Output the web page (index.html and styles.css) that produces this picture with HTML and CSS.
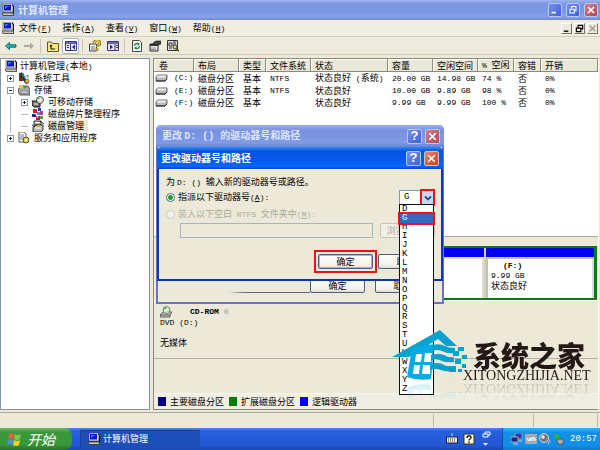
FILE: index.html
```html
<!DOCTYPE html>
<html lang="zh-CN">
<head>
<meta charset="utf-8">
<title>计算机管理</title>
<link rel="stylesheet" href="styles.css">
</head>
<body>
<svg class="sprite" aria-hidden="true">
  <symbol id="pc" viewBox="0 0 12 12"><path d="M1 0h9l1 1v7H1z" fill="#d8d8d0" stroke="#444" stroke-width=".6"/><path d="M2 1h7v5.500H2z" fill="#0a18c8"/><path d="M3 2l4 0-4 3z" fill="#4a6cf8"/><path d="M0 9h11l1 2.500H1z" fill="#c8c8c0" stroke="#222" stroke-width=".7"/><path d="M10 1l1.500 1v6l1 3" stroke="#111" fill="none"/></symbol>
  <symbol id="drive" viewBox="0 0 13 8"><path d="M2.500 1h9.500v4l-2 2H1V3z" fill="#b8b8b8" stroke="#444" stroke-width=".8"/><path d="M2.500 1.500h9l-1.500 2H1.500z" fill="#eee"/><path d="M1 7h9l2-2" stroke="#222" fill="none"/></symbol>
  <symbol id="tools" viewBox="0 0 12 12"><path d="M1 1h4v8H1z" fill="#a01830"/><path d="M3 0l3 2 1 4 4 5-3 1-4-5-2-3z" fill="#333"/><path d="M4 2l4 5" stroke="#29b8c8"/><path d="M7 5l3-2v3M6 10h5" stroke="#777" fill="none"/><circle cx="9" cy="9" r="2" fill="#e0c030" stroke="#333" stroke-width=".6"/></symbol>
  <symbol id="store" viewBox="0 0 12 12"><path d="M1 4l2-2h7l2 3v6H2L0 8z" fill="#aaa" stroke="#333" stroke-width=".8"/><path d="M1 1h4v3H1z" fill="#e8c848"/><path d="M5 1l4 2-3 2z" fill="#37a948"/><path d="M3 7h7v2H3z" fill="#eee" stroke="#444" stroke-width=".5"/></symbol>
  <symbol id="disc" viewBox="0 0 12 12"><path d="M0 5h6l2 3v3H2L0 9z" fill="#777" stroke="#111"/><circle cx="8" cy="4" r="3.500" fill="#d8eed8" stroke="#111" stroke-width=".7"/><path d="M8 4L5 2l2-1.500z" fill="#3fb050"/><path d="M8 4l3 2-1 1z" fill="#e0b030"/><circle cx="8" cy="4" r="1" fill="#fff"/><path d="M2 8h4" stroke="#eee"/></symbol>
  <symbol id="cd" viewBox="0 0 12 12"><path d="M0 9l3-3h9l-2 3v2H0z" fill="#c8c8c0" stroke="#444" stroke-width=".8"/><path d="M0 9h10" stroke="#444" stroke-width=".8"/><circle cx="6.500" cy="4" r="3.500" fill="#cdeacd" stroke="#555" stroke-width=".7"/><path d="M6.500 4L3.500 2.500 6 .7z" fill="#3fb050"/><path d="M6.500 4l3 1.500-1 1.500z" fill="#e0c030"/><circle cx="6.500" cy="4" r="1" fill="#fff"/></symbol>
  <symbol id="defrag" viewBox="0 0 12 12"><path d="M1 1h4v4H1z" fill="#d01830"/><path d="M6 0h3v3H6z" fill="#1848c0"/><path d="M5 4h4v3H5z" fill="#20a8c0"/><path d="M8 3h3v4H8z" fill="#d02898"/><path d="M0 6h4v3H0z" fill="#1828a0"/><path d="M4 8h4v4H4z" fill="#c01838"/><path d="M8 8h3v3H8z" fill="#38a848"/><path d="M3 5l3 5" stroke="#fff"/></symbol>
  <symbol id="dmgr" viewBox="0 0 12 12"><path d="M2 1h7v4H2zM1 7l2-2h8v5l-2 2H1z" fill="#bbb" stroke="#222" stroke-width=".9"/><path d="M3 2.500h5M3 8h6" stroke="#fff"/><path d="M0 5l3 2M8 1l4 3" stroke="#222"/><path d="M5 5h4v2H5z" fill="#c8a838"/></symbol>
  <symbol id="svc" viewBox="0 0 12 12"><path d="M1 0h5l2 2v8H1z" fill="#fff" stroke="#333" stroke-width=".8"/><path d="M2 3h4M2 5h4M2 7h3" stroke="#555" stroke-width=".8"/><circle cx="8" cy="8" r="3" fill="#e0c840" stroke="#333" stroke-width=".8"/><circle cx="8" cy="8" r="1" fill="#fff"/></symbol>
  <symbol id="back" viewBox="0 0 12 12"><path d="M.5 6l4-3.500v2.300H11v2.400H4.500v2.300z" fill="#20b8c8" stroke="#064858" stroke-width=".8"/></symbol>
  <symbol id="fwd" viewBox="0 0 12 12"><path d="M11 6L7 2.500v2.500H1v2h6v2.500z" fill="#aaa99c"/></symbol>
  <symbol id="up" viewBox="0 0 12 12"><path d="M.5 2h4l1 1.500h6v8H.5z" fill="#f6e68a" stroke="#665a18"/><path d="M4 5v4h4" stroke="#111" fill="none"/><path d="M2.500 6.500L4 4.500l1.500 2z"/></symbol>
  <symbol id="pane" viewBox="0 0 12 12"><path d="M.5 1.500h11v9H.5z" fill="#e4e4f0" stroke="#38367c"/><path d="M1 2h10v2H1z" fill="#6a68a8"/><path d="M5.500 4v6" stroke="#38367c"/><path d="M2 5.500h2M2 7.500h2" stroke="#38367c"/><path d="M10 4.500v5L7 7z" fill="#2a2880"/></symbol>
  <symbol id="pane2" viewBox="0 0 12 12"><path d="M.5 1.500h11v9H.5z" fill="#e4e4f0" stroke="#38367c"/><path d="M1 2h10v2H1z" fill="#6a68a8"/><path d="M8 4v6" stroke="#38367c"/><path d="M9 5.500h2M9 7.500h2" stroke="#38367c"/><path d="M3 4.500v5L6 7z" fill="#2a2880"/></symbol>
  <symbol id="help" viewBox="0 0 12 12"><path d="M.5 4h7v7h-7z" fill="#eee" stroke="#444"/><path d="M2 7h4M2 9h4" stroke="#777"/><path d="M5 3c0-3 6-3 6 0 0 2-3 2-3 4M8 8.500v2" stroke="#554800" fill="none" stroke-width="2.600"/><path d="M5 3c0-3 6-3 6 0 0 2-3 2-3 4M8 8.500v2" stroke="#f4dc38" fill="none" stroke-width="1.300"/></symbol>
  <symbol id="refresh" viewBox="0 0 12 12"><path d="M1.500.500h7l2 2v9h-9z" fill="#fff" stroke="#333" stroke-width=".9"/><path d="M3.500 6c0-2 2-3 3.500-2M8.500 6c0 2-2 3-3.500 2" stroke="#188840" fill="none" stroke-width="1.300"/><path d="M6.500 2l2.500 2-2.500 2zM5.500 6L3 8l2.500 2z" fill="#188840"/></symbol>
  <symbol id="props" viewBox="0 0 12 12"><path d="M1 4h8v7H1z" fill="#eee" stroke="#222"/><path d="M1 4h8v2H1z" fill="#333"/><path d="M2 8h5M2 9.500h5" stroke="#666" stroke-width=".7"/><path d="M4 3l3-2h5v3l-3 1H5z" fill="#444" stroke="#111" stroke-width=".6"/></symbol>
  <symbol id="find" viewBox="0 0 12 12"><path d="M.5.500h10v10H.5z" fill="#ddd" stroke="#333"/><path d="M2 3h3v3H2zM6 2h3M6 4h3M2 8h3" stroke="#333" fill="none"/><circle cx="8" cy="7" r="2" fill="#e8d848" stroke="#444"/><path d="M9 9l3 2" stroke="#665a18" stroke-width="1.600"/></symbol>
</svg>

<main class="window">
  <header class="titlebar">
    <svg class="ico"><use href="#pc"/></svg>
    <h1>计算机管理</h1>
    <button class="cap" aria-label="最小化"><svg viewBox="0 0 14 14"><path d="M3 10h5" stroke="#fff" stroke-width="2"/></svg></button>
    <button class="cap" aria-label="还原"><svg viewBox="0 0 14 14"><path d="M5.500 5V3h5v5H8.500M3.500 6h5v4.500h-5z" fill="none" stroke="#fff" stroke-width="1.200"/></svg></button>
    <button class="cap close" aria-label="关闭"><svg viewBox="0 0 14 14"><path d="M3.500 3.500l7 7m0-7l-7 7" stroke="#fff" stroke-width="1.800"/></svg></button>
  </header>
  <nav class="menubar">
    <svg class="ico"><use href="#pc"/></svg>
    <button>文件<span class="l">(<u>F</u>)</span></button>
    <button>操作<span class="l">(<u>A</u>)</span></button>
    <button>查看<span class="l">(<u>V</u>)</span></button>
    <button>窗口<span class="l">(<u>W</u>)</span></button>
    <button>帮助<span class="l">(<u>H</u>)</span></button>
    <div class="mdi">
      <button aria-label="最小化窗口"><svg viewBox="0 0 10 10"><path d="M2 8h5" stroke="#000" stroke-width="1.500"/></svg></button>
      <button aria-label="还原窗口"><svg viewBox="0 0 10 10"><path d="M3.500 4V1.500h5v4H7M1.500 4.500h5v4h-5z" fill="none" stroke="#000" stroke-width="1.300"/></svg></button>
      <button aria-label="关闭窗口"><svg viewBox="0 0 10 10"><path d="M2 2l6 6m0-6L2 8" stroke="#9a988c" stroke-width="1.500"/></svg></button>
    </div>
  </nav>
  <div class="toolbar">
    <button aria-label="后退"><svg class="ico"><use href="#back"/></svg></button>
    <button aria-label="前进"><svg class="ico"><use href="#fwd"/></svg></button>
    <i class="sep"></i>
    <button aria-label="向上"><svg class="ico"><use href="#up"/></svg></button>
    <button class="on" aria-label="显示树"><svg class="ico"><use href="#pane"/></svg></button>
    <i class="sep"></i>
    <button aria-label="帮助"><svg class="ico"><use href="#help"/></svg></button>
    <button aria-label="窗格"><svg class="ico"><use href="#pane2"/></svg></button>
    <i class="sep"></i>
    <button aria-label="刷新"><svg class="ico"><use href="#refresh"/></svg></button>
    <button aria-label="属性"><svg class="ico"><use href="#props"/></svg></button>
    <button aria-label="查找"><svg class="ico"><use href="#find"/></svg></button>
  </div>

  <div class="panes">
    <ul class="tree">
      <li class="root"><svg class="ico"><use href="#pc"/></svg><span>计算机管理<span class="l">(</span>本地<span class="l">)</span></span></li>
      <li><i class="exp plus"></i><svg class="ico"><use href="#tools"/></svg><span>系统工具</span></li>
      <li><i class="exp"></i><svg class="ico"><use href="#store"/></svg><span>存储</span></li>
      <li class="sub"><i class="exp plus"></i><svg class="ico"><use href="#disc"/></svg><span>可移动存储</span></li>
      <li class="sub"><i class="leaf"></i><svg class="ico"><use href="#defrag"/></svg><span>磁盘碎片整理程序</span></li>
      <li class="sub"><i class="leaf"></i><svg class="ico"><use href="#dmgr"/></svg><span class="picked">磁盘管理</span></li>
      <li><i class="exp plus"></i><svg class="ico"><use href="#svc"/></svg><span>服务和应用程序</span></li>
    </ul>

    <section class="detail">
      <div class="volumes">
        <table>
          <colgroup><col class="c-vol"><col class="c-mid"><col class="c-short"><col class="c-mid"><col class="c-state"><col class="c-mid"><col class="c-mid"><col class="c-pct"><col class="c-short"><col></colgroup>
          <thead><tr><th>卷</th><th>布局</th><th>类型</th><th>文件系统</th><th>状态</th><th>容量</th><th>空闲空间</th><th><span class="l">% </span>空闲</th><th>容错</th><th>开销</th></tr></thead>
          <tbody>
            <tr><td><svg class="drv"><use href="#drive"/></svg><span class="l">(C:)</span></td><td>磁盘分区</td><td>基本</td><td class="l">NTFS</td><td>状态良好<span class="l"> (</span>系统<span class="l">)</span></td><td class="l">20.00 GB</td><td class="l">14.98 GB</td><td class="l">74 %</td><td>否</td><td class="l">0%</td></tr>
            <tr><td><svg class="drv"><use href="#drive"/></svg><span class="l">(E:)</span></td><td>磁盘分区</td><td>基本</td><td class="l">NTFS</td><td>状态良好</td><td class="l">10.00 GB</td><td class="l">9.89 GB</td><td class="l">98 %</td><td>否</td><td class="l">0%</td></tr>
            <tr><td><svg class="drv"><use href="#drive"/></svg><span class="l">(F:)</span></td><td>磁盘分区</td><td>基本</td><td></td><td>状态良好</td><td class="l">9.99 GB</td><td class="l">9.99 GB</td><td class="l">100 %</td><td>否</td><td class="l">0%</td></tr>
          </tbody>
        </table>
      </div>
      <div class="disk">
        <div class="extended">
          <div class="part"></div>
          <div class="part last">
            <b class="l">(F:)</b><span class="l">9.99 GB</span><span>状态良好</span>
          </div>
        </div>
      </div>
      <div class="cdrom">
        <div class="cdname"><svg class="ico"><use href="#cd"/></svg><b class="l">CD-ROM</b><span class="l dim">0</span></div>
        <div class="l">DVD (D:)</div>
        <div class="nomedia">无媒体</div>
      </div>
      <div class="legend">
        <span><i class="sw navy"></i>主要磁盘分区</span>
        <span><i class="sw green"></i>扩展磁盘分区</span>
        <span><i class="sw blue"></i>逻辑驱动器</span>
      </div>
    </section>
  </div>
  <footer class="status"><span></span><span></span><span></span></footer>
</main>

<section class="dialog rear">
  <header><h2>更改 <span class="w">D: () </span>的驱动器号和路径</h2>
    <button class="cap" aria-label="帮助">?</button>
    <button class="cap close" aria-label="关闭"><svg viewBox="0 0 14 14"><path d="M3.500 3.500l7 7m0-7l-7 7" stroke="#fff" stroke-width="1.800"/></svg></button>
  </header>
  <div class="rearbody"><i class="rule"></i><button class="push">确定</button><button class="push">取消</button></div>
</section>

<section class="dialog front">
  <header><h2>更改驱动器号和路径</h2>
    <button class="cap" aria-label="帮助">?</button>
    <button class="cap close" aria-label="关闭"><svg viewBox="0 0 14 14"><path d="M3.500 3.500l7 7m0-7l-7 7" stroke="#fff" stroke-width="1.800"/></svg></button>
  </header>
  <form class="body">
    <p>为 <span class="l">D: () </span>输入新的驱动器号或路径。</p>
    <div class="row">
      <input type="radio" name="how" id="assign" checked>
      <label for="assign">指派以下驱动器号<span class="l">(<u>A</u>):</span></label>
      <div class="combo">
        <select aria-label="驱动器号"><option>G</option></select>
        <span class="arrow"><svg viewBox="0 0 10 10"><path d="M2 3.500l3 3 3-3" fill="none" stroke="#334a86" stroke-width="1.800"/></svg></span>
        <ul class="list" role="listbox" aria-label="可用驱动器号">
          <li>D</li><li class="sel">G</li><li>H</li><li>I</li><li>J</li><li>K</li><li>L</li><li>M</li><li>N</li><li>O</li><li>P</li><li>Q</li><li>R</li><li>S</li><li>T</li><li>U</li><li>V</li><li>W</li><li>X</li><li>Y</li><li>Z</li>
        </ul>
      </div>
    </div>
    <div class="row off">
      <input type="radio" name="how" id="mount" disabled>
      <label for="mount">装入以下空白<span class="l"> NTFS </span>文件夹中<span class="l">(<u>M</u>):</span></label>
    </div>
    <div class="pathrow"><input type="text" aria-label="文件夹路径" disabled><button type="button" class="push" disabled>浏览<span class="l">(B)..</span></button></div>
    <div class="actions"><span class="mark"><button type="button" class="push default">确定</button></span><button type="button" class="push">取消</button></div>
  </form>
</section>

<aside class="brand">
  <svg class="house" viewBox="0 0 76 51">
    <path d="M0 27L48 0l17 16H54l-8-7L17 27z" fill="#0aa0d0"/>
    <path d="M20 18l-5 29q11 4 24 2l1-9 2-26zM24 24h6l-1 8h-6zM33 23h7l-1 9h-7zM22 35h6l-1 9h-6zM31 35h8l-1 9h-8z" fill="#08aae4" fill-rule="evenodd"/>
    <path d="M40 15q8-2 13 1 4 2 10 2v5q-8 1-13-2-5-2-10 0zM39 25q8-2 13 0 5 3 10 2v5q-7 1-12-1-5-3-11-1zM38 34q8-2 12 0 5 3 9 2v5q-6 1-10-1-5-2-11 0z" fill="#0aa0cc"/>
    <path d="M66 17h6v4h-6zM61 21h6v5h-6zM70 25h5v4h-5zM63 29h6v5h-6zM57 36h7v6h-7zM70 34h4v4h-4zM66 39h4v3h-4z" fill="#0aa0cc"/>
  </svg>
  <div class="words"><strong>系统之家</strong><span>XITONGZHIJIA.NET</span></div>
</aside>

<footer class="taskbar">
  <button class="start"><svg viewBox="0 0 16 16"><path d="M2 3q3-2 5 0L6 8Q4 6 1 8z" fill="#f06030"/><path d="M8 3q3 2 6 0l-1 5q-3 2-6 0z" fill="#7cc840"/><path d="M1 9q3-2 5 0l-1 5q-2-2-5 0z" fill="#4a90f0"/><path d="M7 9q3 2 6 0l-1 5q-3 2-6 0z" fill="#f8d030"/></svg>开始</button>
  <button class="task"><svg class="ico"><use href="#pc"/></svg>计算机管理</button>
  <div class="quick">
    <svg class="ico" viewBox="0 0 12 12"><path d="M6 0v4" stroke="#ccc"/><path d="M.5 4h11v6H.5z" fill="#f0f0e8" stroke="#222"/><path d="M2 6h8M2 8h8" stroke="#333" stroke-dasharray="1 1"/></svg>
    <svg class="ico" viewBox="0 0 12 12"><path d="M1 1h10v10H1z" fill="#fffce0" stroke="#333"/><path d="M4 5c0-3 4-3 4-.500C8 6 6 6 6 7.500M6 8.500V10" stroke="#222" fill="none" stroke-width="1.500"/></svg>
    <svg class="ico more" viewBox="0 0 12 16"><path d="M5 3V1h5v3H8M3 3h5v3H3z" fill="none" stroke="#fff"/><path d="M3 12h5l-2.500 2.500z" fill="#fff"/></svg>
  </div>
  <div class="tray">
    <svg class="ico" viewBox="0 0 12 12"><path d="M4 0h7v6H4z" fill="#2838a8" stroke="#99b"/><path d="M0 4h7v5H0z" fill="#182878" stroke="#aac"/><path d="M2 11h5M8 8h3" stroke="#cce"/></svg>
    <svg class="ico" viewBox="0 0 12 12"><path d="M0 1h12v10H0z" fill="#aaa"/><path d="M2 5l1.500 3L5 5v3M6 8V5h2v3M8 5h2v3" fill="none" stroke="#fff"/></svg>
    <svg class="ico" viewBox="0 0 12 12"><circle cx="5" cy="5" r="4.500" fill="#777" stroke="#ddd"/><circle cx="4" cy="4" r="1.700" fill="#eee"/><path d="M9 11l2-4" stroke="#a0a8f8" stroke-width="1.500"/></svg>
    <svg class="ico" viewBox="0 0 12 12"><path d="M1 1l5 1 1 4-4 1z" fill="#30b840"/><path d="M4 6l6 0 1 4-4 2-3-3z" fill="#aaa" stroke="#333" stroke-width=".7"/></svg>
    <time>20:57</time>
  </div>
</footer>
</body>
</html>
```
FILE: styles.css
```css
* { box-sizing: border-box; }
body {
  margin: 0;
  min-height: 100vh;
  display: flex;
  flex-direction: column;
  position: relative;
  overflow: hidden;
  background: #ece9d8;
  color: #000;
  font: 9px/12px "Noto Sans CJK SC", sans-serif;
}
button, input, select { font: inherit; color: inherit; margin: 0; padding: 0; border: 0; background: none; }
h1, h2, p, ul { margin: 0; padding: 0; list-style: none; }
svg { display: block; }
.sprite { position: absolute; width: 0; height: 0; }
.l { font-family: "Liberation Mono", monospace; font-size: 8px; white-space: pre; }
.ico { width: 12px; height: 12px; flex: none; }

.window { flex: 1; display: flex; flex-direction: column; }
.titlebar {
  display: flex; align-items: center; gap: 4px;
  height: 20px; padding: 0 2px;
  background: linear-gradient(#9db4ee 0, #7a94e0 20%, #7c98e4 60%, #84a2ea 85%, #7088d4);
}
.titlebar h1 { flex: 1; font-size: 10px; line-height: 16px; color: #dfe8fc; }
.cap {
  width: 14px; height: 14px; flex: none;
  border: 1px solid #b8c8f8; border-radius: 2px;
  background: linear-gradient(135deg, #7590ee, #3d60d8);
  color: #fff; font: bold 13px/12px "Liberation Sans", sans-serif; text-align: center;
}
.cap svg { width: 12px; height: 12px; }
.cap.close { background: linear-gradient(135deg, #d08088, #b04858); }

.menubar {
  display: flex; align-items: center; gap: 11px;
  height: 17px; padding: 0 2px;
  background: #f0eee2; border-bottom: 1px solid #d4d0c0;
}
.menubar > .ico { margin-right: -6px; }
.mdi { margin-left: auto; display: flex; gap: 2px; }
.mdi button { width: 11px; height: 11px; border: 1px solid; border-color: #fff #77756a #77756a #fff; background: #ece9d8; }
.mdi svg { width: 9px; height: 9px; }
.toolbar {
  display: flex; align-items: center; gap: 1px;
  height: 18px; padding: 0 2px;
  background: #eeebdc; border-bottom: 1px solid #cfccba;
}
.toolbar button { width: 17px; height: 16px; display: grid; place-items: center; }
.toolbar .on { border: 1px solid #a8b4cc; border-radius: 2px; background: #fdfdfb; }
.sep { width: 1px; height: 14px; margin: 0 2px; background: #c8c5b4; }

.panes { flex: 1; display: grid; grid-template-columns: 150px 1fr; gap: 3px; padding: 3px 1px 2px 0; }
.tree { background: #fff; border: 1px solid #8494a8; padding: 1px 0; }
.tree li { display: flex; align-items: center; gap: 4px; height: 12px; padding-left: 6px; white-space: nowrap; }
.tree .root { padding-left: 4px; gap: 3px; }
.tree .sub { padding-left: 20px; background: linear-gradient(#b8b8b8, #b8b8b8) 9px 0 / 1px 12px no-repeat; }
.exp {
  width: 7px; height: 7px; flex: none; border: 1px solid #8a98ac;
  background: linear-gradient(#222, #222) 1px 2px / 3px 1px no-repeat;
}
.plus { background: linear-gradient(#222, #222) 1px 2px / 3px 1px no-repeat, linear-gradient(#222, #222) 2px 1px / 1px 3px no-repeat; }
.leaf { width: 7px; height: 1px; flex: none; background: #b8b8b8; }
.picked { background: #ece9d8; padding-right: 4px; }

.detail { display: flex; flex-direction: column; border: 1px solid #8a8878; border-right-color: #fff; min-width: 0; }
.volumes { background: #fff; height: 178px; border-bottom: 1px solid #aca899; overflow: hidden; }
table { width: 100%; table-layout: fixed; border-collapse: collapse; }
.c-vol { width: 40px; }
.c-mid { width: 45px; }
.c-short { width: 27px; }
.c-state { width: 77px; }
.c-pct { width: 36px; }
th, td { height: 12px; padding: 0 0 0 4px; text-align: left; font-weight: 400; line-height: 12px; white-space: nowrap; }
td .l, td.l { line-height: 12px; }
th { background: #ebe8d8; box-shadow: inset -1px -1px #8a8878, inset 1px 1px #fff; }
td:first-child { display: flex; align-items: center; gap: 6px; padding-left: 1px; }
th:first-child { padding-left: 5px; }
.drv { width: 13px; height: 8px; }

.disk { margin-top: 9px; padding-left: 90px; border-bottom: 1px solid #fff; }
.extended { display: flex; gap: 2px; border: 2px solid #0a7a14; border-right-width: 3px; height: 54px; margin-right: 1px; background: #d4d0c0; }
.part { flex: 1; border-top: 9px solid #0000f0; background: #fff; box-shadow: inset 0 2px #e0ddd0, inset -2px 0 #e0ddd0; }
.part.last { flex: 0 0 108px; display: flex; flex-direction: column; padding: 4px 5px 0; box-shadow: inset 2px 2px #c4c1b2, inset -2px 0 #e0ddd0; }
.part.last > * { line-height: 10px; }
.part b { padding-left: 12px; }
.cdrom { height: 58px; padding: 5px 6px; border-bottom: 1px solid #b4b1a2; }
.cdname { display: flex; align-items: center; }
.cdname b { padding-left: 18px; }
.dim { color: #a09e90; padding-left: 5px; }
.cdrom .l { line-height: 10px; }
.nomedia { margin-top: 9px; }
.legend { display: flex; gap: 5px; margin-top: auto; height: 16px; align-items: center; padding-left: 4px; background: #f0eee2; border-top: 1px solid #f8f6ee; }
.legend span { display: flex; align-items: center; gap: 4px; }
.sw { width: 8px; height: 9px; }
.navy { background: #000080; }
.green { background: #008000; }
.blue { background: #0000ff; }
.status { display: grid; grid-template-columns: 1fr 100px 64px; height: 16px; border-top: 1px solid #aca899; padding: 1px 2px 1px 0; }
.status span { border-right: 1px solid #bcb9a8; }

.dialog { position: absolute; display: flex; flex-direction: column; background: #ece9d8; }
.dialog header { display: flex; align-items: center; gap: 3px; height: 22px; padding: 0 2px 0 4px; flex: none; }
.dialog h2 { flex: 1; font-size: 10px; line-height: 16px; color: #fff; white-space: nowrap; }
.dialog .cap { width: 15px; height: 15px; }
.dialog .cap svg { width: 13px; height: 13px; }
.w { font-family: "Liberation Mono", monospace; white-space: pre; }
.rear { left: 156px; top: 125px; width: 288px; height: 179px; border: 2px solid #6a70c8; border-top: 0; border-radius: 5px 5px 0 0; }
.rear header { margin: 0 -2px; padding: 0 4px 0 6px; border-radius: 5px 5px 0 0; background: linear-gradient(#98b0f0, #7890e0 25%, #7f9ae6 80%, #6c84d0); }
.rear h2 { color: #dce6fc; }
.rearbody { flex: 1; display: flex; align-items: flex-end; gap: 10px; padding: 0 12px 9px 70px; }
.rule { flex: 1; height: 1px; margin-right: -10px; background: linear-gradient(90deg, #ece9d8, #5a6c84 20%); }
.front { left: 157px; top: 147px; width: 286px; height: 134px; border: 2px solid #0a36b8; border-top: 0; border-radius: 5px 5px 0 0; }
.front header { margin: 0 -2px; padding: 0 4px; border-radius: 5px 5px 0 0; background: linear-gradient(#3088fc, #0454e0 20%, #055cf0 70%, #0668fc 88%, #0346c8); }
.front .close { background: linear-gradient(135deg, #f08868, #d03c10); }
.push {
  width: 55px; height: 15px; flex: none;
  border: 1px solid #4a6080; border-radius: 2px;
  background: linear-gradient(#fff, #f2f0e8 80%, #dcd8cc); text-align: center; line-height: 13px;
}
.push.default { box-shadow: inset 0 0 0 1px #98b4e8; }
.push:disabled { border-color: #c8c5b6; color: #a8a698; background: #f2f0e6; }
.body { flex: 1; display: flex; flex-direction: column; padding: 7px 7px 0; }
.row { display: flex; align-items: center; gap: 3px; height: 17px; }
.row.off { color: #aca899; }
input[type="radio"] { appearance: none; width: 9px; height: 9px; border: 1px solid #4a6c90; border-radius: 50%; background: #fff; }
input[type="radio"]:checked { background: radial-gradient(#20a020 0 2px, #fff 3px); }
input[type="radio"]:disabled { border-color: #cac8ba; background: #f4f2ea; }
.combo { position: relative; display: flex; margin-left: auto; width: 35px; height: 15px; background: #fff; border: 1px solid #7f9db9; }
.combo select { appearance: none; flex: 1; min-width: 0; padding-left: 4px; font: 9px/13px "Liberation Mono", monospace; }
.arrow { width: 15px; height: 17px; margin: -2px; flex: none; border: 2px solid #f01018; background: #c8d6f8; display: grid; place-items: center; }
.arrow svg { width: 10px; height: 10px; }
.list { position: absolute; left: -1px; right: -1px; top: 13px; border: 1px solid #111; background: #fff; z-index: 1; font: 9px/9px "Liberation Mono", monospace; }
.list li { height: 9px; padding-left: 2px; }
.list .sel { background: #316ac5; color: #fff; outline: 2px solid #f01018; position: relative; }
.pathrow { display: flex; gap: 7px; padding-left: 14px; overflow: hidden; margin: 0 -7px 0 0; flex: none; }
.pathrow input { width: 193px; height: 15px; border: 1px solid #a4b4c0; background: #ece9d8; }
.actions { display: flex; align-items: center; gap: 1px; margin: 12px -7px 0 148px; overflow: hidden; flex: none; }
.mark { border: 2px solid #f01018; padding: 2px; display: flex; }

.brand { position: absolute; left: 392px; top: 330px; z-index: 2; display: flex; -webkit-box-reflect: below 0 linear-gradient(transparent 65%, rgba(0, 0, 0, .22)); }
.house { width: 76px; height: 51px; }
.words { display: flex; flex-direction: column; margin: 10px 0 0 -5px; color: #231815; }
.words strong { font-size: 28px; line-height: 30px; font-weight: 900; padding-left: 10px; white-space: nowrap; }
.words span { font: 14px/12px "Liberation Serif", serif; }

.taskbar { display: flex; align-items: center; height: 22px; flex: none; background: linear-gradient(#4a8af0, #2560dc 15%, #2358d4 80%, #1c48b0); color: #fff; }
.start {
  display: flex; align-items: center; gap: 4px; width: 72px; height: 22px; padding-left: 7px;
  border-radius: 0 8px 8px 0; background: linear-gradient(#6cb868, #3a963a 20%, #38983a 75%, #2a702c);
  font-size: 14px; font-style: italic;
}
.start svg { width: 16px; height: 16px; }
.task { display: flex; align-items: center; gap: 3px; width: 120px; height: 19px; margin-left: 8px; padding-left: 8px; border-radius: 2px; background: #1d4db8; box-shadow: inset 1px 1px #173c94; }
.quick { margin-left: auto; display: flex; align-items: center; gap: 5px; padding-right: 10px; }
.more { height: 16px; }
.tray { display: flex; align-items: center; gap: 2px; width: 98px; height: 22px; padding-left: 8px; background: linear-gradient(#38b4f8, #1290e8 20%, #1290e8 80%, #0f74c4); border-left: 1px solid #0c4ca0; }
.tray time { margin: 0 auto; font: 9px/12px "Liberation Mono", monospace; }
```
